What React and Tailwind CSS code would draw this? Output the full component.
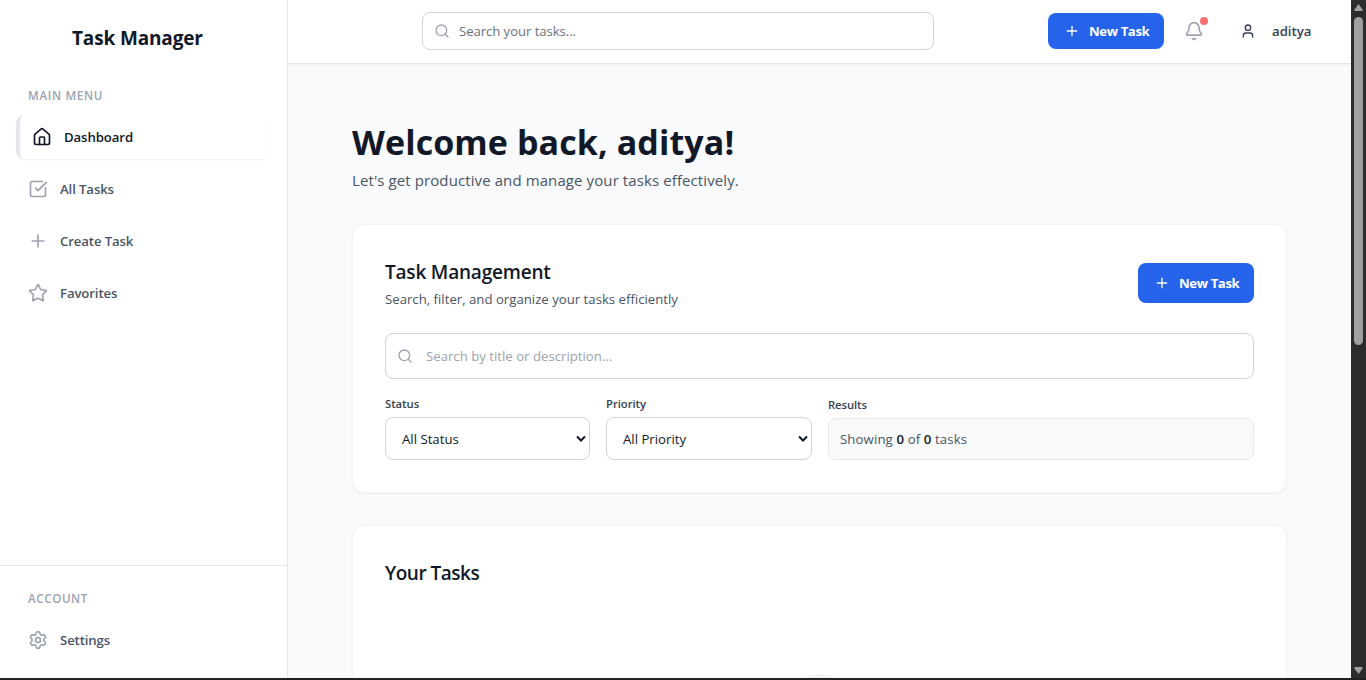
import { House, SquareCheckBig, Plus, Star, Settings, Search, Bell, User } from "lucide-react";

const menu = [
  { label: "All Tasks", Icon: SquareCheckBig },
  { label: "Create Task", Icon: Plus },
  { label: "Favorites", Icon: Star },
];

function NavItem({ label, Icon }) {
  return (
    <a className="flex h-11 items-center gap-3 px-3 text-[13.2px] font-semibold tracking-[-0.12px] text-[#4b5563]">
      <Icon className="h-5 w-5 text-[#9ca3af]" strokeWidth={2} />
      <span className="pt-0.5">{label}</span>
    </a>
  );
}

function Sidebar() {
  return (
    <aside className="flex w-72 shrink-0 flex-col border-r border-[#e5e7eb] bg-white">
      <h1 className="pt-6 pl-[72px] text-[19px] leading-7 font-bold tracking-[-0.15px] text-[#111827]">Task Manager</h1>
      <nav className="flex flex-1 flex-col px-4 pt-[35px]">
        <p className="px-3 text-[11.6px] leading-[17px] font-semibold tracking-[0.7px] text-[#9ca3af]">MAIN MENU</p>
        <div className="mt-[11px] flex flex-col gap-2">
          <a className="flex h-11 items-center gap-3 rounded-lg border-l-4 border-[#e5e7eb] px-3 text-[13.2px] font-semibold tracking-[-0.1px] text-[#111827] shadow-[0_1px_2px_rgba(0,0,0,0.05)]">
            <House className="h-5 w-5" strokeWidth={2} />
            <span className="pt-0.5">Dashboard</span>
          </a>
          {menu.map((m) => <NavItem key={m.label} {...m} />)}
        </div>
      </nav>
      <div className="h-[113px] border-t border-[#e5e7eb] px-4 pt-6">
        <p className="px-3 text-[11.6px] leading-[17px] font-semibold tracking-[0.6px] text-[#9ca3af]">ACCOUNT</p>
        <div className="mt-[11px]"><NavItem label="Settings" Icon={Settings} /></div>
      </div>
    </aside>
  );
}

function NewTask({ tall }) {
  return (
    <button className={`flex w-[116px] shrink-0 items-center rounded-lg bg-[#2563eb] pl-4 text-[13.2px] font-bold tracking-[-0.4px] text-white ${tall ? "h-10" : "h-9"}`}>
      <Plus className="mr-2 h-4 w-4" strokeWidth={2} />
      <span className="pt-0.5 pl-px whitespace-nowrap">New Task</span>
    </button>
  );
}

function Header() {
  return (
    <header className="z-10 flex h-16 shrink-0 items-start border-b border-[#e5e7eb] bg-white pt-3 shadow-[0_1px_2px_rgba(0,0,0,0.05)]">
      <div className="ml-[134px] flex h-[38px] w-[512px] items-center rounded-lg border border-[#d1d5db] pl-[11px]">
        <Search className="h-4 w-4 text-[#9ca3af]" strokeWidth={2} />
        <span className="ml-[9px] pt-0.5 text-[13.2px] tracking-[-0.08px] text-[#6b7280]">Search your tasks...</span>
      </div>
      <div className="mt-px ml-[114px] flex h-9 items-center">
        <NewTask />
        <div className="relative ml-5 h-5 w-5">
          <Bell className="h-5 w-5 text-[#9ca3af]" strokeWidth={2} />
          <span className="absolute -top-1 -right-1 h-2 w-2 rounded-full bg-[#f87171]" />
        </div>
        <User className="ml-9 h-4 w-4 text-[#374151]" strokeWidth={2} />
        <span className="ml-4 pt-0.5 text-[13.2px] font-semibold text-[#374151]">aditya</span>
      </div>
    </header>
  );
}

function Select({ label, value, width }) {
  return (
    <div className={width}>
      <p className="text-[11.3px] leading-4 font-semibold tracking-[-0.05px] text-[#374151]">{label}</p>
      <div className="mt-[5px] flex h-[43px] items-center justify-between rounded-lg border border-[#d1d5db] bg-white pr-0.5 pl-4 text-[13.2px] text-[#111827]">
        <span className="pt-0.5">{value}</span>
        <svg className="h-3 w-3" viewBox="0 0 12 12" fill="none" stroke="currentColor" strokeWidth="2">
          <path d="M2 3.500 6 7.500 10 3.500" />
        </svg>
      </div>
    </div>
  );
}

function ScrollBar() {
  return (
    <div className="flex w-[15px] shrink-0 flex-col items-center bg-[#2c2c2c] pt-1 pb-1">
      <svg className="h-[7px] w-[9px] shrink-0" viewBox="0 0 9 7"><path d="M4.500 0 8.500 5.500Q9 7 8 7H1Q0 7 .5 5.500Z" fill="#9f9f9f" /></svg>
      <div className="mt-1.5 h-[328px] w-[9px] rounded-full bg-[#9f9f9f]" />
      <svg className="mt-auto h-[7px] w-[9px] shrink-0" viewBox="0 0 9 7"><path d="M4.500 7 .5 1.500Q0 0 1 0H8Q9 0 8.500 1.500Z" fill="#9f9f9f" /></svg>
    </div>
  );
}

export default function App() {
  return (
    <div className="flex h-[680px] w-[1366px] flex-col overflow-hidden bg-[#202124] font-['Open_Sans','Noto_Sans',sans-serif]">
      <div className="flex h-[678px] shrink-0">
        <Sidebar />
        <div className="flex min-w-0 flex-1 flex-col overflow-hidden bg-[#f9fafb]">
          <Header />
          <main className="flex min-h-0 flex-1 flex-col overflow-hidden pt-14 pr-16 pl-16">
            <h2 className="text-[34px] leading-[45px] font-bold tracking-[0.1px] text-[#111827]">Welcome back, aditya!</h2>
            <p className="mt-[3px] text-[15px] leading-6 tracking-[0.1px] text-[#4b5563]">Let's get productive and manage your tasks effectively.</p>
            <section className="mt-8 h-[269px] w-[935px] shrink-0 rounded-xl border border-[#f3f4f6] bg-white px-8 pt-8 shadow-[0_1px_2px_rgba(0,0,0,0.05)]">
              <div className="flex items-center justify-between">
                <div>
                  <h3 className="pt-px text-[19px] leading-7 font-semibold tracking-[-0.2px] text-[#111827]">Task Management</h3>
                  <p className="mt-[3px] text-[13.2px] leading-5 text-[#4b5563]">Search, filter, and organize your tasks efficiently</p>
                </div>
                <NewTask tall />
              </div>
              <div className="mt-6 flex h-[46px] items-center rounded-lg border border-[#d1d5db] pl-[11px]">
                <Search className="h-4 w-4 text-[#9ca3af]" strokeWidth={2} />
                <span className="ml-[13px] pt-0.5 text-[13.2px] text-[#9ca3af]">Search by title or description...</span>
              </div>
              <div className="mt-[17px] flex gap-4">
                <Select label="Status" value="All Status" width="w-[205px]" />
                <Select label="Priority" value="All Priority" width="w-[206px]" />
                <div className="flex-1 pt-px">
                  <p className="text-[11.3px] leading-4 font-semibold tracking-[-0.1px] text-[#374151]">Results</p>
                  <div className="mt-[5px] flex h-[42px] items-center rounded-lg border border-[#e5e7eb] bg-[#f9fafb] px-[11px] text-[13.2px] tracking-[0.12px] text-[#4b5563]">
                    <p className="pt-0.5">Showing <b className="font-semibold text-[#111827]">0</b> of <b className="font-semibold text-[#111827]">0</b> tasks</p>
                  </div>
                </div>
              </div>
            </section>
            <section className="mt-8 flex h-[420px] w-[935px] shrink-0 flex-col rounded-xl border border-[#f3f4f6] bg-white px-8 pt-8 shadow-[0_1px_2px_rgba(0,0,0,0.05)]">
              <h3 className="pt-px text-[19px] leading-7 font-semibold tracking-[-0.5px] text-[#111827]">Your Tasks</h3>
              <div className="mt-[87px] h-16 w-16 self-center rounded-full bg-[#f3f4f6]" />
            </section>
          </main>
        </div>
        <ScrollBar />
      </div>
    </div>
  );
}
